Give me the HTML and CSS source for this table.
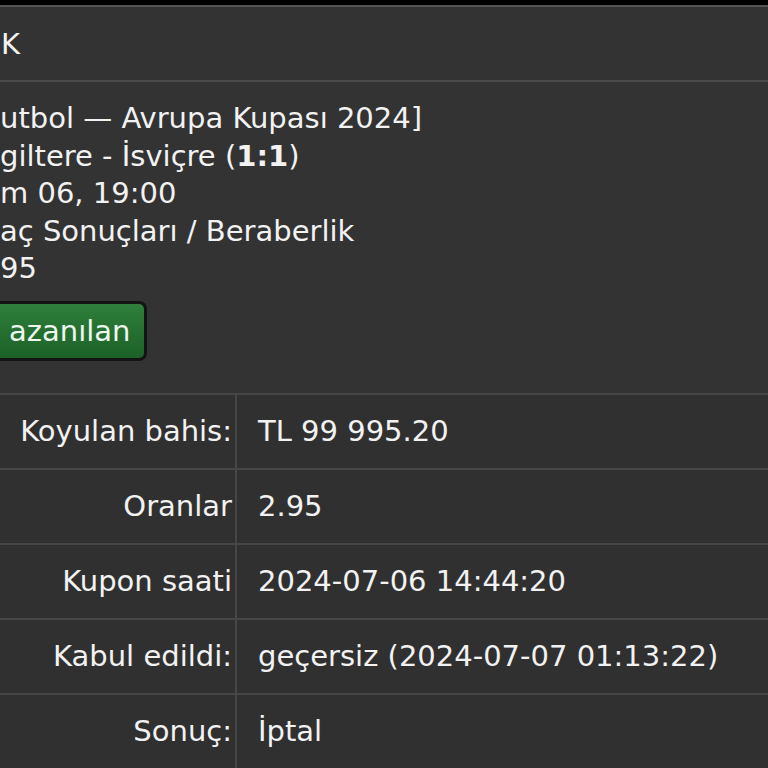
FILE: index.html
```html
<!DOCTYPE html>
<html lang="tr">
<head>
    <meta charset="UTF-8">
    <meta name="viewport" content="width=device-width, initial-scale=1.0">
    <title>Kupon</title>
    <link rel="stylesheet" href="styles.css">
</head>
<body>
    <div class="coupon">
        <div class="coupon-head">K</div>

        <div class="event">
            <div class="event-line">utbol — Avrupa Kupası 2024]</div>
            <div class="event-line">giltere - İsviçre (<b>1:1</b>)</div>
            <div class="event-line">m 06, 19:00</div>
            <div class="event-line">aç Sonuçları / Beraberlik</div>
            <div class="event-line">95</div>
            <div class="status-wrap">
                <span class="status-won">azanılan</span>
            </div>
        </div>

        <table class="info">
            <tr>
                <td class="label">Koyulan bahis:</td>
                <td class="value">TL 99 995.20</td>
            </tr>
            <tr>
                <td class="label">Oranlar</td>
                <td class="value">2.95</td>
            </tr>
            <tr>
                <td class="label">Kupon saati</td>
                <td class="value">2024-07-06 14:44:20</td>
            </tr>
            <tr>
                <td class="label">Kabul edildi:</td>
                <td class="value">geçersiz (2024-07-07 01:13:22)</td>
            </tr>
            <tr>
                <td class="label">Sonuç:</td>
                <td class="value">İptal</td>
            </tr>
        </table>
    </div>
</body>
</html>
```

FILE: styles.css
```css
html, body {
    height: 100%;
}
body {
    margin: 0;
    background-color: #000;
    font-family: "DejaVu Sans", Verdana, sans-serif;
    font-size: 29px;
    color: #f2f2f2;
    overflow: hidden;
}
.coupon {
    margin-top: 5px;
    min-height: 763px;
    background-color: #333333;
    border-top: 2px solid #545454;
}
.coupon-head {
    height: 73px;
    display: flex;
    align-items: center;
    padding-left: 1px;
    border-bottom: 2px solid #4b4b4b;
}
.event {
    padding: 18px 0 32px 0;
    line-height: 37.5px;
}
.event-line b {
    font-weight: bold;
}
.status-wrap {
    margin-top: 13px;
}
.status-won {
    display: inline-block;
    margin-left: -10px;
    padding: 8px 14px 8px 19px;
    line-height: 38px;
    color: #eef7ee;
    background: linear-gradient(#2f7f3b, #1c6128);
    border: 3px solid #141414;
    border-left: none;
    border-radius: 0 8px 8px 0;
}
.info {
    width: 100%;
    border-collapse: collapse;
}
.info td {
    height: 73px;
    border-top: 2px solid #464646;
    background-color: #303030;
    padding: 0;
}
.info .label {
    width: 232px;
    text-align: right;
    padding-right: 3px;
    border-right: 2px solid #464646;
}
.info .value {
    padding-left: 21px;
}
```
